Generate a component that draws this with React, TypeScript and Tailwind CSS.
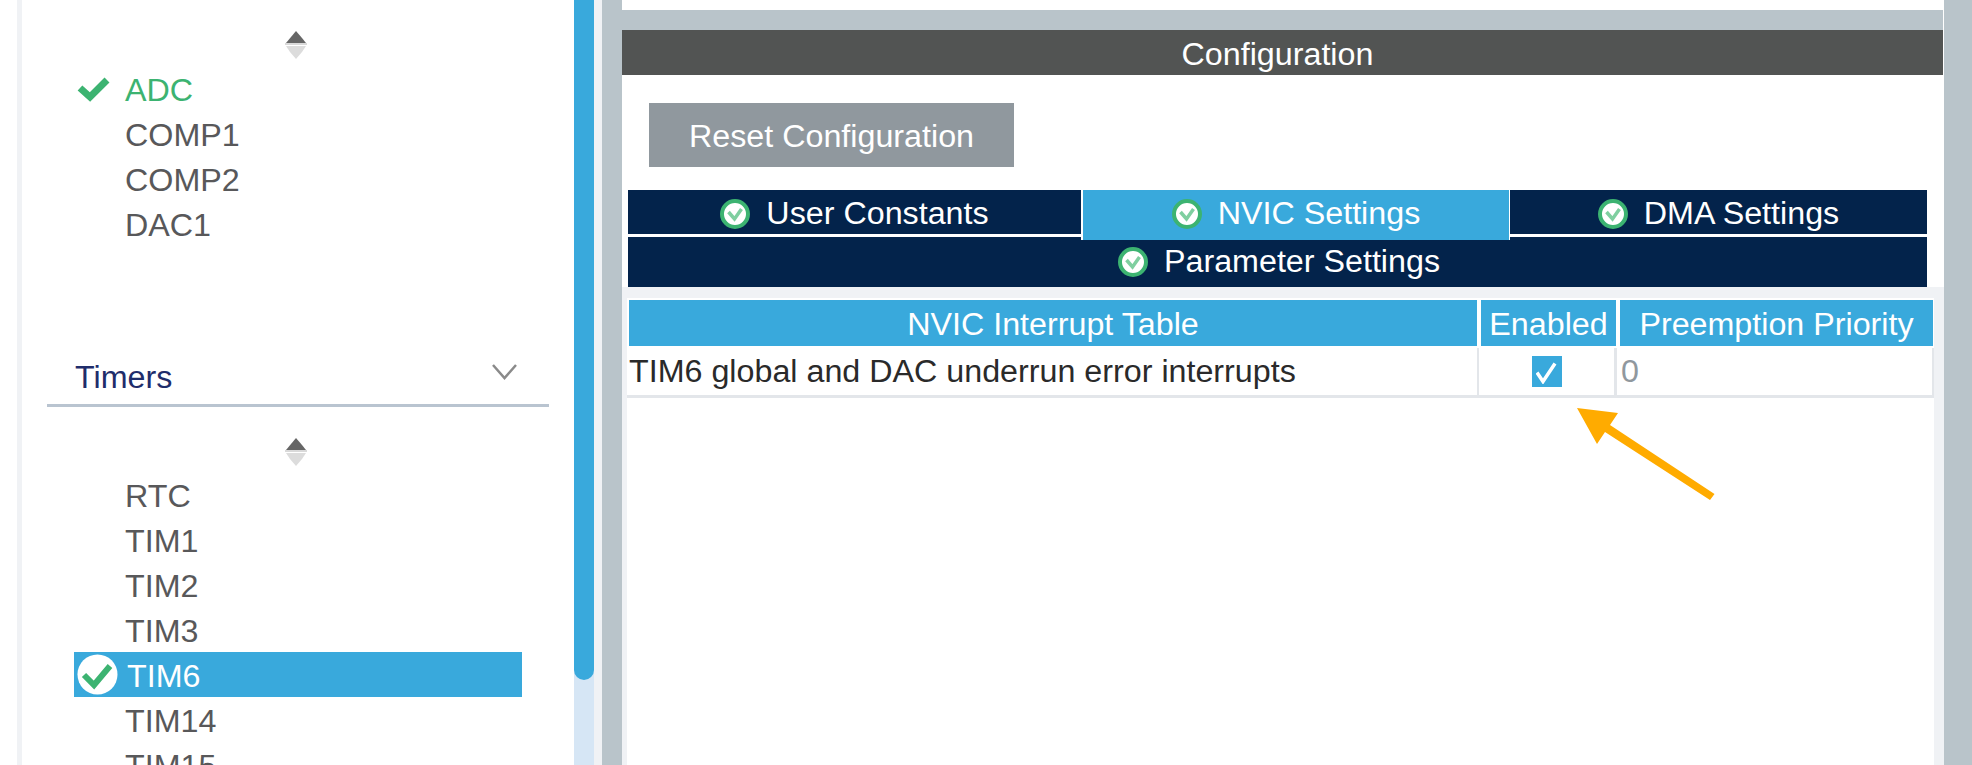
const font = "font-['Liberation_Sans',Arial,sans-serif]";

function Spinner() {
  return (
    <svg width="22" height="28" viewBox="0 0 22 28" className="ml-[263px] block blur-[0.3px]">
      <path d="M11 0 L17 7 L21 12 L1 12 Z" fill="#666666" />
      <rect x="0" y="12" width="22" height="2" fill="#d9d9d9" />
      <path d="M1 15 L21 15 L17 21 L11 28 L5 21 Z" fill="#dcdcdc" />
    </svg>
  );
}

function Check() {
  return (
    <svg width="33" height="25" viewBox="0 0 33 25" className="blur-[0.4px]">
      <path d="M3 11 L13 20 L30 3" fill="none" stroke="#3cb371" strokeWidth="7" />
    </svg>
  );
}

function CircleCheck() {
  return (
    <svg width="41" height="41" viewBox="0 0 41 41" className="blur-[0.6px]">
      <circle cx="20.5" cy="20.5" r="20" fill="#ffffff" />
      <path d="M7 21 L17 31 L33 12" fill="none" stroke="#3cb371" strokeWidth="6" />
    </svg>
  );
}

function TabIcon() {
  return (
    <svg width="30" height="30" viewBox="0 0 30 30" className="shrink-0 blur-[0.6px]">
      <circle cx="15" cy="15" r="13" fill="#ffffff" stroke="#3cb371" strokeWidth="4" />
      <path d="M8.5 13 L14.5 20 L21.5 10" fill="none" stroke="#7fcfa0" strokeWidth="3.5" />
    </svg>
  );
}

function ListRow({ label, className = "h-[45px]" }: { label: string; className?: string }) {
  return (
    <div className={`flex items-center pt-[2px] pl-[51px] text-[#58585a] ${className}`}>{label}</div>
  );
}

function Tab({ label, className }: { label: string; className: string }) {
  return (
    <div className={`flex items-center justify-center gap-[16px] text-white ${className}`}>
      <TabIcon />
      <span>{label}</span>
    </div>
  );
}

function Sidebar() {
  return (
    <div className="w-[557px] shrink-0 border-l-[5px] border-[#f0f2f5] pt-[31px]">
      <Spinner />
      <div className="mt-[8px] ml-[52px] w-[448px]">
        <div className="flex h-[45px] items-center text-[#3cb371]">
          <div className="w-[51px] pl-[3px]">
            <Check />
          </div>
          <span className="pt-[1px]">ADC</span>
        </div>
        <ListRow label="COMP1" />
        <ListRow label="COMP2" />
        <ListRow label="DAC1" />
      </div>

      <div className="mt-[103px] ml-[25px] flex h-[57px] w-[502px] items-center justify-between border-b-[3px] border-[#b9c4d0] pr-[32px] pl-[28px] text-[#1f2d6b]">
        <span>Timers</span>
        <svg width="25" height="17" viewBox="0 0 25 17" className="mb-[9px]">
          <path d="M1 1 L12.5 14 L24 1" fill="none" stroke="#8a8a8a" strokeWidth="2.5" />
        </svg>
      </div>

      <div className="mt-[31px]">
        <Spinner />
      </div>
      <div className="mt-[7px] ml-[52px] w-[448px]">
        <ListRow label="RTC" />
        <ListRow label="TIM1" />
        <ListRow label="TIM2" />
        <ListRow label="TIM3" className="h-[44px]" />
        <div className="flex h-[45px] items-center bg-[#39a9dc] pl-[3px] text-white">
          <div className="w-[50px]">
            <CircleCheck />
          </div>
          <span className="pt-[4px]">TIM6</span>
        </div>
        <ListRow label="TIM14" className="mt-[1px] h-[45px]" />
        <ListRow label="TIM15" />
      </div>
    </div>
  );
}

function ConfigPanel() {
  return (
    <div className="relative flex w-[1322px] shrink-0 flex-col">
      <div className="h-[10px] shrink-0 bg-white" />
      <div className="mr-[1px] h-[20px] shrink-0 bg-[#b9c4ca]" />
      <div className="mr-[1px] flex h-[45px] shrink-0 items-center justify-center bg-[#525453] pt-[4px] pr-[10px] text-white">
        Configuration
      </div>

      <div className="shrink-0 bg-white pt-[28px] pb-[23px] pl-[27px]">
        <div className="flex h-[64px] w-[365px] items-center justify-center bg-[#90989e] pt-[2px] text-white">
          Reset Configuration
        </div>
      </div>

      <div className="shrink-0 bg-white pl-[6px]">
        <div className="w-[1299px]">
          <div className="flex h-[44px] items-start">
            <Tab label="User Constants" className="h-[44px] w-[453px] bg-[#03234b] pt-[3px]" />
            <Tab
              label="NVIC Settings"
              className="relative z-10 h-[50px] w-[429px] border-r-[1px] border-l-[2px] border-white bg-[#39a9dc] pb-[3px]"
            />
            <Tab label="DMA Settings" className="h-[44px] w-[417px] bg-[#03234b] pt-[3px]" />
          </div>
          <Tab label="Parameter Settings" className="mt-[3px] h-[50px] bg-[#03234b] pb-[1px] pl-[3px]" />
        </div>
      </div>

      <div className="flex-1 bg-[#f0f2f5] pt-[11px] pr-[10px] pl-[5px]">
        <div className="h-full bg-white pt-[2px] pl-[2px]">
          <div className="flex h-[46px] text-white">
            <div className="flex w-[848px] items-center justify-center bg-[#39a9dc] pt-[3px]">NVIC Interrupt Table</div>
            <div className="ml-[4px] flex w-[135px] items-center justify-center bg-[#39a9dc] pt-[3px]">Enabled</div>
            <div className="ml-[4px] flex w-[313px] items-center justify-center bg-[#39a9dc] pt-[3px]">Preemption Priority</div>
          </div>
          <div className="-ml-[2px] flex h-[52px] border-b-[3px] border-[#e3e6ea] pt-[2px]">
            <div className="flex w-[852px] items-center border-r-[2px] border-[#e3e6ea] pl-[2px] text-[#2a2a2a]">
              TIM6 global and DAC underrun error interrupts
            </div>
            <div className="flex w-[138px] items-center justify-center border-r-[3px] border-[#e3e6ea] pl-[1px]">
              <div className="flex h-[31px] w-[30px] items-center justify-center bg-[#39a9dc]">
                <svg width="22" height="24" viewBox="0 0 22 24">
                  <path d="M1 12.500 L7 21.500 L19 3.500" fill="none" stroke="#ffffff" strokeWidth="3.500" />
                </svg>
              </div>
            </div>
            <div className="flex flex-1 items-center border-r-[2px] border-[#e3e6ea] pl-[4px] text-[#90989e]">0</div>
          </div>
        </div>
      </div>

      <svg
        width="150"
        height="100"
        viewBox="0 0 150 100"
        className="absolute top-[405px] left-[950px]"
      >
        <path
          d="M5 3 L46 8 L38 20 L142.500 89 L138 95 L33 27 L25 39 Z"
          fill="#ffab00"
        />
      </svg>
    </div>
  );
}

export default function App() {
  return (
    <div className={`flex h-[765px] overflow-hidden bg-white pl-[17px] text-[32.25px] leading-none ${font}`}>
      <Sidebar />
      <div className="w-[20px] shrink-0 bg-[#d6e6f5]">
        <div className="h-[680px] rounded-b-[10px] bg-[#39a9dc]" />
      </div>
      <div className="w-[8px] shrink-0 bg-[#f0f2f5]" />
      <div className="w-[20px] shrink-0 bg-[#b9c4ca]" />
      <ConfigPanel />
      <div className="flex-1 bg-[#b9c4ca]" />
    </div>
  );
}
